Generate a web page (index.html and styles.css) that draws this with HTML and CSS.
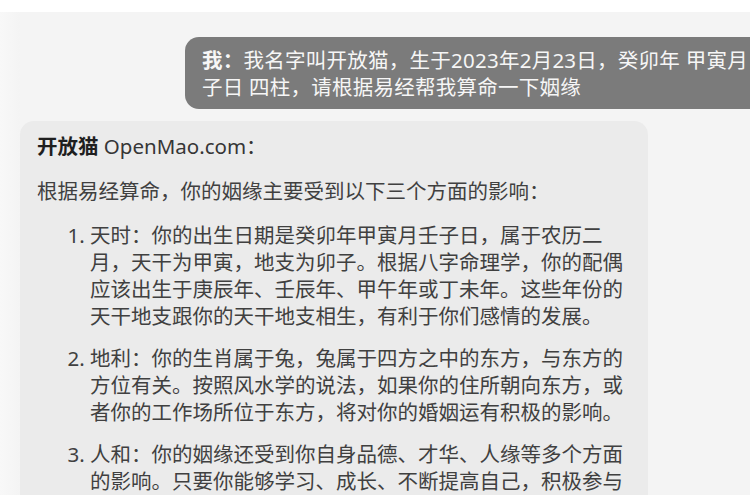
FILE: index.html
```html
<!DOCTYPE html>
<html lang="zh-CN">
<head>
<meta charset="utf-8">
<title>开放猫 OpenMao.com</title>
<link rel="stylesheet" href="styles.css">
</head>
<body>
<div class="screen">
  <div class="chat">
    <div class="msg-user"><b>我：</b>我名字叫开放猫，生于2023年2月23日，癸卯年 甲寅月 壬子日 四柱，请根据易经帮我算命一下姻缘</div>
    <div class="msg-bot">
      <p class="bot-name"><b>开放猫</b> OpenMao.com：</p>
      <p class="bot-text">根据易经算命，你的姻缘主要受到以下三个方面的影响：</p>
      <ol class="bot-list">
        <li>天时：你的出生日期是癸卯年甲寅月壬子日，属于农历二月，天干为甲寅，地支为卯子。根据八字命理学，你的配偶应该出生于庚辰年、壬辰年、甲午年或丁未年。这些年份的天干地支跟你的天干地支相生，有利于你们感情的发展。</li>
        <li>地利：你的生肖属于兔，兔属于四方之中的东方，与东方的方位有关。按照风水学的说法，如果你的住所朝向东方，或者你的工作场所位于东方，将对你的婚姻运有积极的影响。</li>
        <li>人和：你的姻缘还受到你自身品德、才华、人缘等多个方面的影响。只要你能够学习、成长、不断提高自己，积极参与社交活动，就能吸引到与你相配的伴侣。</li>
      </ol>
    </div>
  </div>
</div>
</body>
</html>
```

FILE: styles.css
```css
html, body {
  margin: 0;
  padding: 0;
  background: #ffffff;
}

body {
  width: 750px;
  height: 500px;
  overflow: hidden;
  font-family: "Noto Sans", "Noto Sans CJK SC", sans-serif;
}

.screen {
  margin-top: 12px;
  height: 483px;
  overflow: hidden;
  background: linear-gradient(90deg, #f8f8f8 0px, #f4f4f4 20px, #f4f4f4 100%);
  padding-top: 25px;
  box-sizing: border-box;
}

.chat {
  width: 800px;
  display: flex;
  flex-direction: column;
  gap: 12px;
}

.msg-user {
  margin-left: 185px;
  background: #7b7b7b;
  color: #f6f6f6;
  border-radius: 14px 0 0 14px;
  padding: 10px 17px 8px 17px;
  font-size: 20.5px;
  line-height: 27px;
  letter-spacing: 0.25px;
}

.msg-user b {
  font-weight: 700;
}

.msg-bot {
  margin-left: 20px;
  width: 628px;
  box-sizing: border-box;
  background: #ebebeb;
  border-radius: 14px;
  padding: 12px 18px 14px 17px;
  color: #404040;
  font-size: 20.5px;
  line-height: 27px;
}

.msg-bot p {
  margin: 0;
}

.bot-name {
  margin-bottom: 18px !important;
  color: #363636;
}

.bot-name b {
  color: #1f1f1f;
  font-weight: 700;
}

.bot-text {
  margin-bottom: 17px !important;
}

.bot-list {
  margin: 0;
  padding-left: 53px;
}

.bot-list li {
  margin-bottom: 15px;
}
```
